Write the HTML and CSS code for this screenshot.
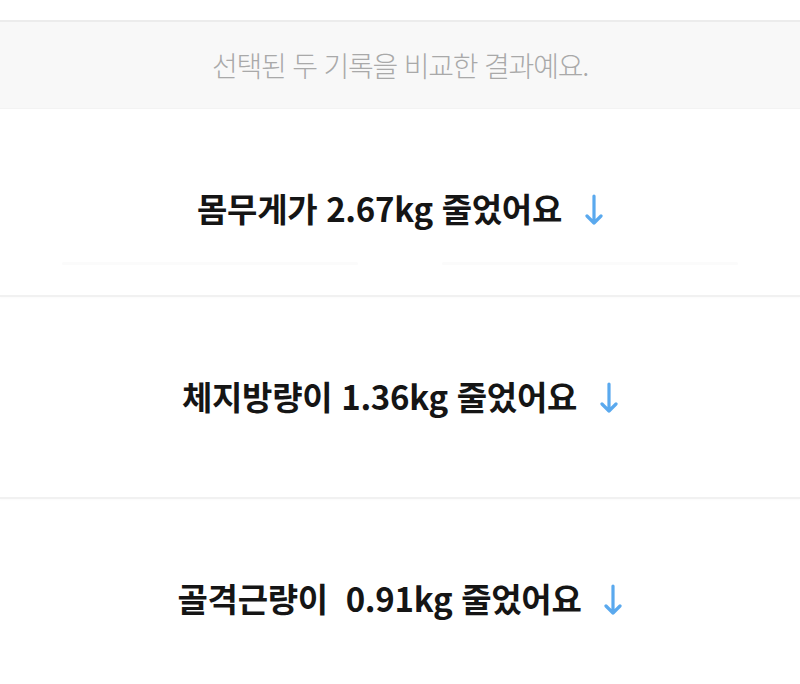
FILE: index.html
```html
<!DOCTYPE html>
<html lang="ko">
<head>
  <meta charset="UTF-8" />
  <meta name="viewport" content="width=device-width, initial-scale=1" />
  <title>기록 비교</title>
  <link rel="stylesheet" href="styles.css">
</head>
<body>
  <div class="top-gap"></div>

  <div class="notice">선택된 두 기록을 비교한 결과예요.</div>

  <main>
    <section class="result result-first">
      <h2 class="result-title">
        <span>몸무게가 2.67kg 줄었어요</span>
        <svg class="arrow" viewBox="0 0 18 32" aria-hidden="true">
          <path d="M9 2 V29 M2 22 L9 29 L16 22" />
        </svg>
      </h2>
      <div class="chart-lines">
        <div class="chart-line"></div>
        <div class="chart-line"></div>
      </div>
    </section>

    <section class="result">
      <h2 class="result-title">
        <span>체지방량이 1.36kg 줄었어요</span>
        <svg class="arrow" viewBox="0 0 18 32" aria-hidden="true">
          <path d="M9 2 V29 M2 22 L9 29 L16 22" />
        </svg>
      </h2>
    </section>

    <section class="result">
      <h2 class="result-title">
        <span>골격근량이&nbsp; 0.91kg 줄었어요</span>
        <svg class="arrow" viewBox="0 0 18 32" aria-hidden="true">
          <path d="M9 2 V29 M2 22 L9 29 L16 22" />
        </svg>
      </h2>
    </section>
  </main>
</body>
</html>
```

FILE: styles.css
```css
html, body {
  margin: 0;
  padding: 0;
  background: #fff;
  font-family: "Noto Sans CJK KR", "Noto Sans", sans-serif;
  color: #151515;
}

.top-gap {
  height: 20px;
}

/* 상단 안내 띠 */
.notice {
  height: 86px;
  display: flex;
  align-items: center;
  justify-content: center;
  background: #f8f8f8;
  border-top: 2px solid #ececec;
  border-bottom: 1px solid #f3f3f3;
  color: #a9a9a9;
  font-size: 28px;
  font-weight: 300;
  letter-spacing: -1.2px;
}

.result {
  padding: 78px 0 80px;
  border-bottom: 2px solid #f1f1f1;
  box-shadow: 0 1px 2px rgba(0, 0, 0, 0.02);
}

.result-first {
  padding-bottom: 30px;
}

.result-title {
  margin: 0;
  height: 42px;
  display: flex;
  align-items: center;
  justify-content: center;
  gap: 23px;
  font-size: 33px;
  font-weight: 700;
  letter-spacing: -0.3px;
}

.arrow {
  width: 18px;
  height: 32px;
  margin-top: 4px;
}

.arrow path {
  fill: none;
  stroke: #5aa9ee;
  stroke-width: 3.2;
  stroke-linecap: round;
  stroke-linejoin: round;
}

/* 흐릿하게 남은 그래프 줄 */
.chart-lines {
  display: flex;
  justify-content: space-between;
  padding: 0 62px;
  margin-top: 33px;
}

.chart-line {
  width: 296px;
  height: 3px;
  border-radius: 2px;
  background: #fbfbfb;
}
```
